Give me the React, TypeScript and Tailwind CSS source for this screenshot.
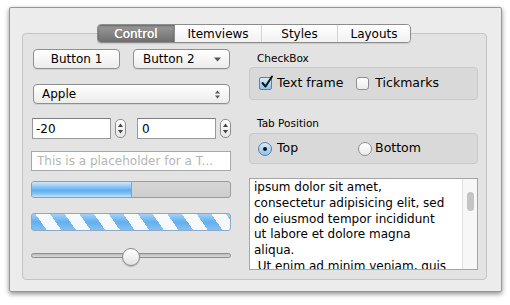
import React from "react";

const font = { fontFamily: '"DejaVu Sans", "Liberation Sans", sans-serif' };

function UpDown({ className }: { className?: string }) {
  return (
    <svg className={className} width="5" height="9" viewBox="0 0 5 9">
      <path d="M0 3.5 L2.5 0.5 L5 3.5 Z" fill="#555" />
      <path d="M0 5.5 L2.5 8.5 L5 5.5 Z" fill="#555" />
    </svg>
  );
}

function SpinArrows() {
  return (
    <div className="ml-[4px] w-[11px] h-[19px] rounded-[5px] border border-[#8e8e8e] bg-gradient-to-b from-white to-[#e6e6e6] flex flex-col items-center justify-between py-[3px]">
      <svg width="5" height="4" viewBox="0 0 5 4">
        <path d="M0 4 L2.5 0.5 L5 4 Z" fill="#444" />
      </svg>
      <svg width="5" height="4" viewBox="0 0 5 4">
        <path d="M0 0 L2.5 3.5 L5 0 Z" fill="#444" />
      </svg>
    </div>
  );
}

const lines = [
  "ipsum dolor sit amet,",
  "consectetur adipisicing elit, sed",
  "do eiusmod tempor incididunt",
  "ut labore et dolore magna",
  "aliqua.",
  " Ut enim ad minim veniam, quis",
];

export default function App() {
  return (
    <div className="w-[510px] h-[305px] bg-white overflow-hidden text-black" style={font}>
      <div className="mt-[7px] ml-[9px] w-[493px] h-[285px] bg-[#ececec] border border-[#969696] rounded-[2px] shadow-[0_2px_5px_rgba(0,0,0,0.45)] pt-[16px]">
        {/* Tabs */}
        <div className="relative z-10 flex justify-center">
          <div className="flex ml-[-3px] h-[19px] rounded-[4px] border border-[#8d8d8d] overflow-hidden text-[12px] shadow-[0_1px_1px_rgba(0,0,0,0.12)]">
            <div className="w-[76px] flex items-center justify-center text-white bg-gradient-to-b from-[#9b9b9b] to-[#6f6f6f] shadow-[inset_0_1px_2px_rgba(0,0,0,0.35)] [text-shadow:0_0_0.4px_#fff]">
              Control
            </div>
            <div className="w-[87px] flex items-center justify-center bg-gradient-to-b from-white to-[#f1f1f1] border-l border-[#8d8d8d]">
              Itemviews
            </div>
            <div className="w-[76px] flex items-center justify-center bg-gradient-to-b from-white to-[#f1f1f1] border-l border-[#d4d4d4]">
              Styles
            </div>
            <div className="w-[73px] flex items-center justify-center bg-gradient-to-b from-white to-[#f1f1f1] border-l border-[#d4d4d4]">
              Layouts
            </div>
          </div>
        </div>

        {/* Pane */}
        <div className="-mt-[10px] ml-[12px] w-[465px] h-[247px] bg-[#e3e3e3] border border-[#c4c4c4] rounded-[4px] pt-[15px] pl-[8px] pr-[8px] flex">
          {/* Left column */}
          <div className="w-[200px] flex flex-col">
            <div className="flex h-[20px] text-[12px]">
              <div className="ml-[2px] w-[87px] h-[20px] rounded-[4px] border border-[#8f8f8f] bg-gradient-to-b from-white to-[#ececec] flex items-center justify-center shadow-[0_1px_0_rgba(0,0,0,0.08)]">
                Button 1
              </div>
              <div className="ml-[13px] w-[97px] h-[20px] rounded-[4px] border border-[#8f8f8f] bg-gradient-to-b from-white to-[#ececec] flex items-center pl-[9px] pr-[8px] shadow-[0_1px_0_rgba(0,0,0,0.08)]">
                <span className="flex-1">Button 2</span>
                <svg width="7" height="5" viewBox="0 0 7 5">
                  <path d="M0 0.5 L3.5 4.5 L7 0.5 Z" fill="#555" />
                </svg>
              </div>
            </div>

            <div className="mt-[15px] ml-[2px] w-[197px] h-[20px] rounded-[4px] border border-[#8f8f8f] bg-gradient-to-b from-white to-[#ececec] flex items-center pl-[8px] pr-[9px] text-[12px] shadow-[0_1px_0_rgba(0,0,0,0.08)]">
              <span className="flex-1">Apple</span>
              <UpDown />
            </div>

            <div className="mt-[14px] h-[21px] flex items-center text-[12px]">
              <div className="ml-[1px] w-[79px] h-[21px] bg-white border border-[#9a9a9a] border-t-[#7e7e7e] flex items-center pl-[3px]">
                -20
              </div>
              <SpinArrows />
              <div className="ml-[11px] w-[79px] h-[21px] bg-white border border-[#9a9a9a] border-t-[#7e7e7e] flex items-center pl-[4px]">
                0
              </div>
              <SpinArrows />
            </div>

            <div className="mt-[12px] w-[200px] h-[20px] bg-white border border-[#a8a8a8] flex items-center pl-[5px] text-[12px] text-[#b5b5b5] whitespace-nowrap overflow-hidden">
              This is a placeholder for a T...
            </div>

            <div className="mt-[10px] w-[200px] h-[17px] rounded-[3px] border border-[#9c9c9c] bg-gradient-to-b from-[#d6d6d6] to-[#cdcdcd] overflow-hidden">
              <div className="w-[100px] h-full bg-[linear-gradient(to_bottom,#cfe6fb_0%,#9fcdf6_25%,#5eaef0_55%,#7cc0f4_75%,#c3e2fb_100%)] border-r border-[#7aa7d0]" />
            </div>

            <div className="mt-[15px] w-[200px] h-[18px] rounded-[3px] border border-[#8ea9c4] overflow-hidden relative bg-[repeating-linear-gradient(55deg,#5aabef_0px,#5aabef_12px,#f4f8fc_12px,#f4f8fc_24px)]">
              <div className="absolute inset-0 bg-gradient-to-b from-white/45 via-white/5 to-white/25" />
            </div>

            <div className="mt-[17px] h-[18px] relative">
              <div className="absolute left-0 right-0 top-[5px] h-[5px] rounded-full border border-[#8f8f8f] bg-gradient-to-b from-[#bcbcbc] to-[#d8d8d8]" />
              <div className="absolute left-[91px] top-0 w-[18px] h-[18px] rounded-full border border-[#8a8a8a] bg-gradient-to-b from-white to-[#e3e3e3] shadow-[0_1px_1px_rgba(0,0,0,0.2)]" />
            </div>
          </div>

          {/* Right column */}
          <div className="ml-[18px] w-[229px] flex flex-col">
            <div className="mt-[3px] h-[13px] pl-[8px] text-[10.5px] leading-[13px]">CheckBox</div>
            <div className="mt-[2px] h-[33px] rounded-[4px] bg-[#d9d9d9] border border-[#c9c9c9] flex items-center text-[12.5px]">
              <div className="ml-[9px] w-[13px] h-[13px] rounded-[2px] border border-[#5d7fa3] bg-gradient-to-b from-[#d7ebfb] to-[#8fc3ee] relative">
                <svg className="absolute -top-[3px] left-[1px]" width="13" height="14" viewBox="0 0 13 14">
                  <path d="M1.5 8 L4.5 11.5 L11 1.5" fill="none" stroke="#111" strokeWidth="2" strokeLinecap="round" strokeLinejoin="round" />
                </svg>
              </div>
              <span className="ml-[5px]">Text frame</span>
              <div className="ml-[13px] w-[13px] h-[13px] rounded-[3px] border border-[#8f8f8f] bg-gradient-to-b from-white to-[#ebebeb]" />
              <span className="ml-[6px]">Tickmarks</span>
            </div>

            <div className="mt-[17px] h-[13px] pl-[8px] text-[10.5px] leading-[13px]">Tab Position</div>
            <div className="mt-[3px] h-[31px] rounded-[4px] bg-[#d9d9d9] border border-[#c9c9c9] flex items-center text-[12.5px]">
              <div className="ml-[8px] w-[14px] h-[14px] rounded-full border border-[#5d7fa3] bg-gradient-to-b from-[#d7ebfb] to-[#8fc3ee] flex items-center justify-center">
                <div className="w-[4px] h-[4px] rounded-full bg-[#111]" />
              </div>
              <span className="ml-[5px]">Top</span>
              <div className="ml-[60px] w-[14px] h-[14px] rounded-full border border-[#8f8f8f] bg-gradient-to-b from-white to-[#ebebeb]" />
              <span className="ml-[3px]">Bottom</span>
            </div>

            <div className="mt-[14px] h-[92px] bg-white border border-[#a5a5a5] flex overflow-hidden">
              <div className="flex-1 pl-[4px] pt-[1px] text-[12px] leading-[15.75px] whitespace-pre overflow-hidden">
                {lines.map((l, i) => (
                  <div key={i}>{l}</div>
                ))}
              </div>
              <div className="w-[15px] bg-[#f7f7f7] border-l border-[#e2e2e2] pt-[13px] flex justify-center">
                <div className="w-[7px] h-[19px] rounded-full bg-[#c4c4c4]" />
              </div>
            </div>
          </div>
        </div>
      </div>
    </div>
  );
}
